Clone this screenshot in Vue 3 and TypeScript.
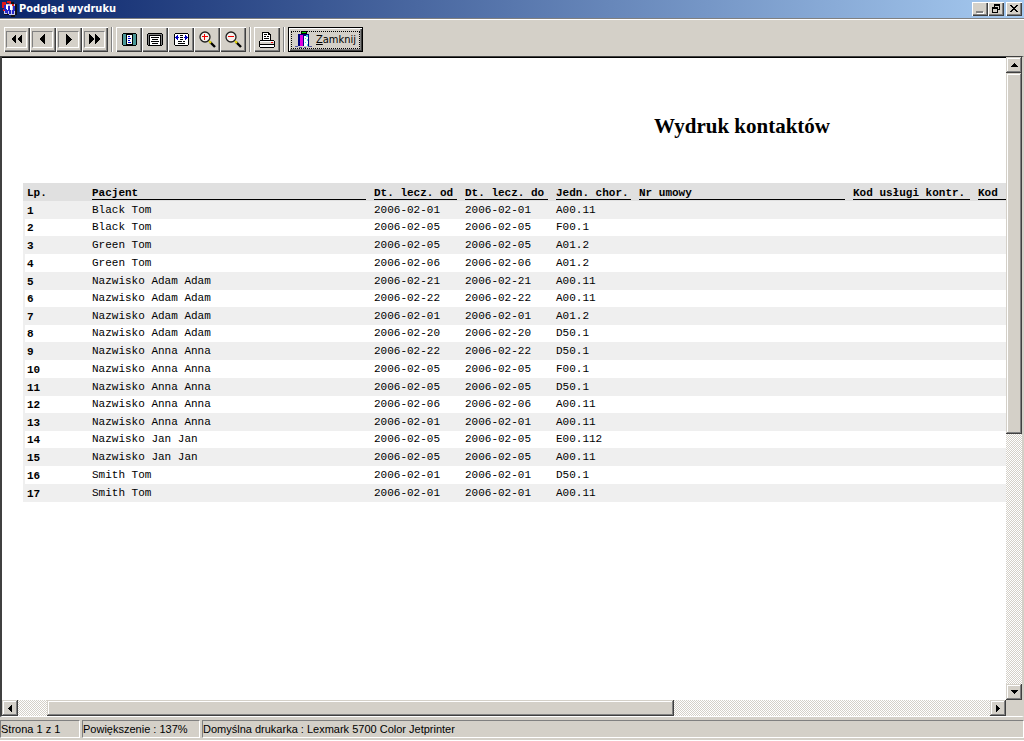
<script setup lang="ts">
interface Contact {
  patient: string
  from: string
  to: string
  code: string
}

const contact = (patient: string, date: string, code: string): Contact => ({ patient, from: date, to: date, code })

const contacts: Contact[] = [
  contact('Black Tom', '2006-02-01', 'A00.11'),
  contact('Black Tom', '2006-02-05', 'F00.1'),
  contact('Green Tom', '2006-02-05', 'A01.2'),
  contact('Green Tom', '2006-02-06', 'A01.2'),
  contact('Nazwisko Adam Adam', '2006-02-21', 'A00.11'),
  contact('Nazwisko Adam Adam', '2006-02-22', 'A00.11'),
  contact('Nazwisko Adam Adam', '2006-02-01', 'A01.2'),
  contact('Nazwisko Adam Adam', '2006-02-20', 'D50.1'),
  contact('Nazwisko Anna Anna', '2006-02-22', 'D50.1'),
  contact('Nazwisko Anna Anna', '2006-02-05', 'F00.1'),
  contact('Nazwisko Anna Anna', '2006-02-05', 'D50.1'),
  contact('Nazwisko Anna Anna', '2006-02-06', 'A00.11'),
  contact('Nazwisko Anna Anna', '2006-02-01', 'A00.11'),
  contact('Nazwisko Jan Jan', '2006-02-05', 'E00.112'),
  contact('Nazwisko Jan Jan', '2006-02-05', 'A00.11'),
  contact('Smith Tom', '2006-02-01', 'D50.1'),
  contact('Smith Tom', '2006-02-01', 'A00.11'),
]

const columns = ['Pacjent', 'Dt. lecz. od', 'Dt. lecz. do', 'Jedn. chor.', 'Nr umowy', 'Kod usługi kontr.', 'Kod']

const navigation = [
  { label: 'Pierwsza strona', points: ['6,0 6,10 1,5', '12,0 12,10 7,5'] },
  { label: 'Poprzednia strona', points: ['9,0 9,11 3,5'] },
  { label: 'Następna strona', points: ['4,0 4,11 10,5'] },
  { label: 'Ostatnia strona', points: ['1,0 1,10 6,5', '7,0 7,10 12,5'] },
]
</script>

<template>
  <div class="window">
    <header class="titlebar">
      <svg class="app-icon" width="16" height="16" viewBox="0 0 16 16" shape-rendering="crispEdges" aria-hidden="true">
        <path fill="#c8c8e8" d="M2 3h11v11H2z" />
        <path fill="#e01818" d="M0 1h4v3H2v3H0zM5 0h4v3H7V2H5zM1 8h2v2H1zM10 3h2v2h-2z" />
        <path fill="#101018" d="M9 1h3v2H9zM13 3h2v11h-2v2h-4v-2h4zM2 13h5v1H2z" />
        <path fill="#fff" d="M4 4h2v5H4zM8 4h2v5H8z" />
        <path fill="#2828c8" d="M2 4h2v4h1v4H3V9H2zM6 5h2v4h1v4H7v-3H6v3H5V9h1zM11 5h2v5h-1v3h-2V9h1z" />
      </svg>
      <h1 class="caption">Podgląd wydruku</h1>
      <button class="sys" type="button" aria-label="Minimalizuj">
        <svg width="12" height="10" viewBox="0 0 12 10" shape-rendering="crispEdges"><path fill="#fff" d="M3 8h7v2H3z" /><path fill="#808080" d="M2 7h7v2H2z" /></svg>
      </button>
      <button class="sys" type="button" aria-label="Przywróć">
        <svg width="12" height="10" viewBox="0 0 12 10" shape-rendering="crispEdges"><path d="M4 0h6v6H8V5h1V2H5v1H4zM2 3h6v6H2zM3 5v3h4V5z" fill-rule="evenodd" /></svg>
      </button>
      <button class="sys close-sys" type="button" aria-label="Zamknij okno">
        <svg width="12" height="10" viewBox="0 0 12 10" shape-rendering="crispEdges"><path d="M2 1h2v1h1v1h2V2h1V1h2v1H9v1H8v1H7v1h1v1h1v1h1v1H8V7H7V6H5v1H4v1H2V7h1V6h1V5h1V4H4V3H3V2H2z" /></svg>
      </button>
    </header>

    <div class="toolbar" role="toolbar" aria-label="Podgląd">
      <div class="group">
        <button v-for="item in navigation" :key="item.label" class="tool nav" type="button" :aria-label="item.label">
          <span class="frame">
            <svg width="13" height="11" viewBox="0 0 13 11" shape-rendering="crispEdges"><polygon v-for="p in item.points" :key="p" :points="p" /></svg>
          </span>
        </button>
      </div>
      <span class="divider"></span>
      <div class="group">
        <button class="tool" type="button" aria-label="Cała strona">
          <svg width="15" height="13" viewBox="0 0 15 13" shape-rendering="crispEdges">
            <path d="M1 0h13v1h1v11h-1v1H1v-1H0V1h1z" /><path fill="#4a9898" d="M1 1h13v11H1z" />
            <path d="M4 1h7v11H4z" /><path fill="#fff" d="M5 2h5v9H5z" />
            <path fill="#0000c0" d="M6 3h2v1H6zM6 5h3v1H6zM6 7h2v1H6zM6 9h3v1H6z" />
          </svg>
        </button>
        <button class="tool" type="button" aria-label="Rozmiar rzeczywisty">
          <svg width="16" height="13" viewBox="0 0 16 13" shape-rendering="crispEdges">
            <path d="M1 0h14v1h1v11h-1v1H1v-1H0V1h1z" /><path fill="#808080" d="M1 1h14v11H1z" />
            <path d="M2 2h12v10H2z" /><path fill="#fff" d="M3 3h10v9H3z" />
            <path d="M4 4h8v1H4zM5 6h6v1H5zM4 8h8v1H4zM5 10h6v1H5z" />
          </svg>
        </button>
        <button class="tool" type="button" aria-label="Szerokość strony">
          <svg width="15" height="13" viewBox="0 0 15 13" shape-rendering="crispEdges">
            <path d="M1 0h13v1h1v11h-1v1H1v-1H0V1h1z" /><path fill="#fff" d="M1 1h13v11H1z" />
            <path fill="#0000c0" d="M1 4h1V3h1V2h1v2h1v1H4v2H3V6H2V5H1zM14 4h-1V3h-1V2h-1v2h-1v1h1v2h1V6h1V5h1z" />
            <path d="M6 2h3v1H6zM6 4h3v1H6zM6 6h3v1H6zM4 8h4v1H4zM9 8h2v1H9zM4 10h7v1H4z" />
          </svg>
        </button>
        <button class="tool" type="button" aria-label="Powiększ">
          <svg width="17" height="17" viewBox="0 0 17 17">
            <path d="M11 11l5 5" stroke="#000" stroke-width="2.4" /><path d="M10 10l2 2" stroke="#e8d800" stroke-width="2" />
            <circle cx="6" cy="6" r="5" fill="#f4f0ec" stroke="#202020" stroke-width="1.3" /><path d="M3 5.5h6M5.5 3v6" stroke="#f00000" />
          </svg>
        </button>
        <button class="tool" type="button" aria-label="Pomniejsz">
          <svg width="17" height="17" viewBox="0 0 17 17">
            <path d="M11 11l5 5" stroke="#000" stroke-width="2.4" /><path d="M10 10l2 2" stroke="#e8d800" stroke-width="2" />
            <circle cx="6" cy="6" r="5" fill="#f4f0ec" stroke="#202020" stroke-width="1.3" /><path d="M3 5.5h6" stroke="#f00000" />
          </svg>
        </button>
      </div>
      <span class="divider"></span>
      <button class="tool" type="button" aria-label="Drukuj">
        <svg width="16" height="16" viewBox="0 0 16 16" shape-rendering="crispEdges">
          <path d="M3 0h7v1h1v1h1v6H3z" /><path fill="#fff" d="M4 1h5v2h2v5H4z" />
          <path d="M5 2h3v1H5zM5 4h2v1H5zM8 4h2v1H8zM5 6h5v1H5z" />
          <path d="M1 8h14v1h1v6h-1v1H1v-1H0V9h1z" /><path fill="#fff" d="M1 9h14v1H1z" /><path fill="#d4d0c8" d="M1 10h14v2H1z" />
          <path fill="#fff" d="M1 13h14v2H1z" /><path fill="#f00000" d="M12 10h2v1h-2z" />
        </svg>
      </button>
      <span class="divider"></span>
      <button class="close" type="button">
        <span class="focus">
          <svg width="17" height="17" viewBox="0 0 17 17" shape-rendering="crispEdges" aria-hidden="true">
            <path fill="#000" d="M6 0h6v3H6z" /><path fill="#00e000" d="M7 1h4v1H7z" />
            <path fill="#000080" d="M3 3h11v12H3z" /><path fill="#e000e0" d="M5 4h3v11H5z" />
            <path fill="#f4ffff" d="M9 5h4v10H9z" /><path fill="#40d8e8" d="M11 4h2v2h-2zM10 7h1v1h-1zM12 8h1v2h-1zM10 11h1v1h-1zM12 13h1v2h-1z" />
            <path fill="#5858a0" d="M0 15h3v1H0zM4 16h3v1H4zM9 16h2v1H9zM13 15h4v1h-4z" />
          </svg>
          <span><u>Z</u>amknij</span>
        </span>
      </button>
    </div>

    <main class="preview">
      <section class="page">
        <h2 class="report-title">Wydruk kontaktów</h2>
        <table class="report">
          <colgroup>
            <col class="c-no" /><col class="c-patient" /><col class="c-date" /><col class="c-date" /><col class="c-code" /><col class="c-contract" /><col class="c-service" /><col class="c-last" />
          </colgroup>
          <thead>
            <tr>
              <th scope="col">Lp.</th>
              <th v-for="name in columns" :key="name" scope="col"><span class="rule">{{ name }}</span></th>
            </tr>
          </thead>
          <tbody>
            <tr v-for="(row, index) in contacts" :key="index">
              <th scope="row">{{ index + 1 }}</th>
              <td>{{ row.patient }}</td>
              <td>{{ row.from }}</td>
              <td>{{ row.to }}</td>
              <td>{{ row.code }}</td>
              <td></td>
              <td></td>
              <td></td>
            </tr>
          </tbody>
        </table>
      </section>
      <div class="scroll vertical">
        <button class="arrow" type="button" aria-label="W górę"><svg width="7" height="4" viewBox="0 0 7 4" shape-rendering="crispEdges"><path d="M3 0h1v1h1v1h1v1h1v1H0V3h1V2h1V1h1z" /></svg></button>
        <div class="thumb"></div>
        <div class="rest"></div>
        <button class="arrow" type="button" aria-label="W dół"><svg width="7" height="4" viewBox="0 0 7 4" shape-rendering="crispEdges"><path d="M0 0h7v1H6v1H5v1H4v1H3V3H2V2H1V1H0z" /></svg></button>
      </div>
      <div class="scroll horizontal">
        <button class="arrow" type="button" aria-label="W lewo"><svg width="4" height="7" viewBox="0 0 4 7" shape-rendering="crispEdges"><path d="M4 0v7H3V6H2V5H1V4H0V3h1V2h1V1h1V0z" /></svg></button>
        <div class="before"></div>
        <div class="thumb"></div>
        <div class="rest"></div>
        <button class="arrow" type="button" aria-label="W prawo"><svg width="4" height="7" viewBox="0 0 4 7" shape-rendering="crispEdges"><path d="M0 0h1v1h1v1h1v1h1v1H3v1H2v1H1v1H0z" /></svg></button>
      </div>
      <div class="corner"></div>
    </main>

    <footer class="status">
      <span class="cell page-cell">Strona 1 z 1</span>
      <span class="cell zoom-cell">Powiększenie : 137%</span>
      <span class="cell printer-cell">Domyślna drukarka : Lexmark 5700 Color Jetprinter</span>
    </footer>
  </div>
</template>

<style>
body {
  margin: 0;
  background: #d4d0c8;
}
</style>

<style scoped>
.window {
  display: flex;
  flex-direction: column;
  height: 100vh;
  overflow: hidden;
  background: #d4d0c8;
  color: #000;
  font: 11px/14px "DejaVu Sans Condensed", "DejaVu Sans", sans-serif;
}
button {
  box-sizing: border-box;
  margin: 0;
  padding: 0;
  border: 0;
  background: #d4d0c8;
  color: #000;
  font: inherit;
  display: flex;
  align-items: center;
  justify-content: center;
}
svg {
  display: block;
  flex: none;
}
.titlebar {
  display: flex;
  align-items: center;
  flex: none;
  height: 18px;
  padding: 0 2px;
  background: linear-gradient(to right, #0a246a, #a6caf0);
}
.caption {
  flex: 1;
  margin: 0 0 0 1px;
  color: #fff;
  font: bold 11px/18px "DejaVu Sans Condensed", "DejaVu Sans", sans-serif;
}
.sys {
  width: 16px;
  height: 14px;
  box-shadow: inset 1px 1px #fff, inset -1px -1px #404040, inset -2px -2px #808080;
}
.close-sys {
  margin-left: 2px;
}
.toolbar {
  display: flex;
  align-items: center;
  flex: none;
  box-sizing: border-box;
  height: 38px;
  padding: 4px 4px 0;
  border-top: 1px solid #808080;
  box-shadow: inset 0 1px #fff;
}
.group {
  display: flex;
}
.tool {
  width: 26px;
  height: 25px;
  box-shadow: inset 1px 1px #fff, inset -1px -1px #404040, inset -2px -2px #808080;
}
.frame {
  box-sizing: border-box;
  display: flex;
  align-items: center;
  justify-content: center;
  width: 21px;
  height: 17px;
  margin-right: 1px;
  border: 1px solid;
  border-color: #808080 #fff #fff #808080;
}
.divider {
  width: 1px;
  height: 25px;
  margin: 0 3px;
  border-left: 1px solid #808080;
  background: #fff;
}
.close {
  width: 75px;
  height: 25px;
  border: 1px solid #000;
  box-shadow: inset 1px 1px #fff, inset -1px -1px #404040, inset -2px -2px #808080;
  line-height: 16px;
}
.focus {
  box-sizing: border-box;
  display: flex;
  align-items: center;
  justify-content: center;
  gap: 4px;
  width: 69px;
  height: 18px;
  border: 1px dotted #000;
}
.preview {
  display: grid;
  grid-template: minmax(0, 1fr) 16px / minmax(0, 1fr) 16px;
  flex: 1;
  min-height: 0;
  border: solid;
  border-width: 1px 2px;
  border-color: #404040 #d4d0c8 #fff #404040;
}
.page {
  overflow: hidden;
  padding-left: 21px;
  border-top: 1px solid #000;
  background: #fff;
}
.report-title {
  width: 1438px;
  margin: 55px 0 43px;
  text-align: center;
  font: bold 21px/27px "Liberation Serif", "Times New Roman", serif;
}
.report {
  width: 1075px;
  table-layout: fixed;
  border-collapse: collapse;
  font: 11px/13px "Liberation Mono", "Courier New", monospace;
}
.c-no { width: 69px; }
.c-patient { width: 282px; }
.c-date { width: 91px; }
.c-code { width: 83px; }
.c-contract { width: 214px; }
.c-service { width: 125px; }
.c-last { width: 120px; }
.report th,
.report td {
  padding: 0;
  text-align: left;
  white-space: nowrap;
  vertical-align: middle;
}
.report tr {
  height: 18px;
}
.report th:first-child {
  padding: 2px 0 0 4px;
}
.report thead {
  background: #e0e0e0;
}
.rule {
  display: block;
  margin-right: 8px;
  padding-top: 3px;
  border-bottom: 1px solid #000;
  line-height: 12px;
}
.report tbody tr:nth-child(odd) {
  background: #efefef;
}
.report tbody tr:nth-child(even) {
  background: linear-gradient(to right, #efefef 2px, #fff 2px);
}
.report tbody tr:is(:nth-child(2), :nth-child(6), :nth-child(8), :nth-child(12), :nth-child(14)) {
  height: 17px;
}
.scroll {
  display: flex;
  background: repeating-conic-gradient(#fff 0 25%, #d4d0c8 0 50%) 0 0 / 2px 2px;
}
.vertical {
  flex-direction: column;
}
.arrow {
  flex: none;
  width: 16px;
  height: 16px;
}
.arrow,
.thumb {
  background: #d4d0c8;
  box-shadow: inset -1px -1px #404040, inset 1px 1px #d4d0c8, inset -2px -2px #808080, inset 2px 2px #fff;
}
.vertical .thumb { flex: 361; }
.vertical .rest { flex: 250; }
.horizontal .before { flex: 29; }
.horizontal .thumb { flex: 627; }
.horizontal .rest { flex: 316; }
.status {
  display: flex;
  flex: none;
  gap: 2px;
  height: 18px;
  padding: 3px 0;
  box-shadow: inset 0 -1px #fff;
  font-family: "Liberation Sans", Arial, sans-serif;
}
.cell {
  box-sizing: border-box;
  padding: 1px 0 0;
  border: 1px solid;
  border-color: #808080 #fff #fff #808080;
  white-space: nowrap;
}
.page-cell {
  width: 80px;
}
.zoom-cell {
  width: 118px;
}
.printer-cell {
  flex: 1;
}
</style>
